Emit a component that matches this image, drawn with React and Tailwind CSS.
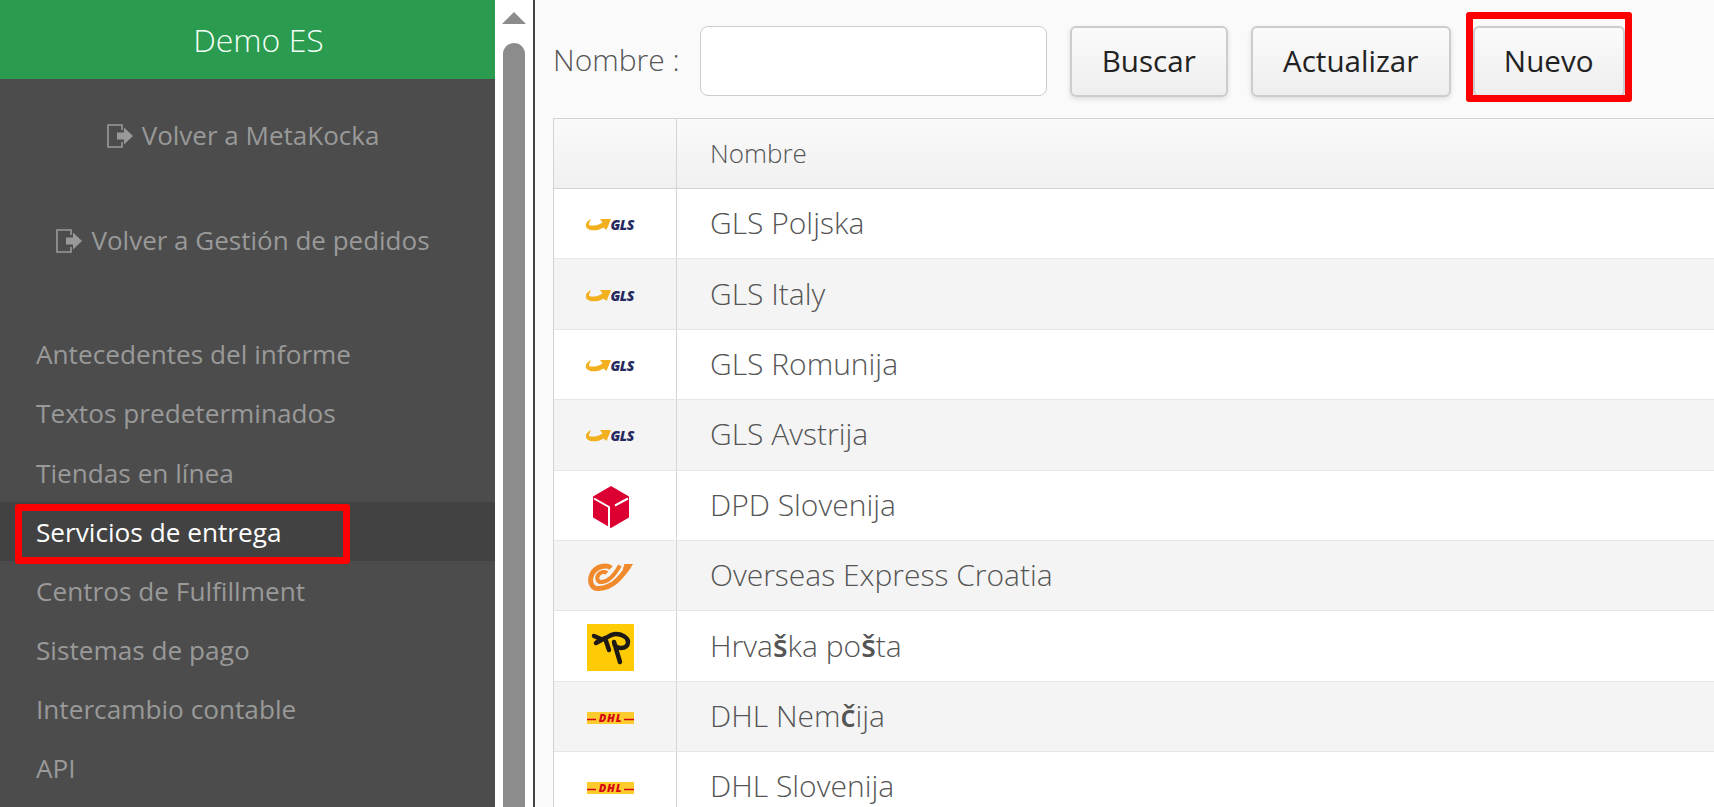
import React from "react";

const menuItems = [
  "Antecedentes del informe",
  "Textos predeterminados",
  "Tiendas en línea",
  "Servicios de entrega",
  "Centros de Fulfillment",
  "Sistemas de pago",
  "Intercambio contable",
  "API",
];

const rows = [
  { logo: "gls", name: "GLS Poljska" },
  { logo: "gls", name: "GLS Italy" },
  { logo: "gls", name: "GLS Romunija" },
  { logo: "gls", name: "GLS Avstrija" },
  { logo: "dpd", name: "DPD Slovenija" },
  { logo: "overseas", name: "Overseas Express Croatia" },
  { logo: "hp", name: <>Hrva<b className="font-semibold">š</b>ka po<b className="font-semibold">š</b>ta</> },
  { logo: "dhl", name: <>DHL Nem<b className="font-semibold">č</b>ija</> },
  { logo: "dhl", name: "DHL Slovenija" },
];

function ExitIcon() {
  return (
    <svg width="27" height="24" viewBox="0 0 27 24" className="shrink-0">
      <path d="M15 6V1H1v22h14v-5" fill="none" stroke="#999" strokeWidth="1.6" />
      <path d="M10 8.500h7V3.500l9 8.500-9 8.500v-5h-7z" fill="#999" />
    </svg>
  );
}

function GlsLogo() {
  return (
    <svg width="49" height="24" viewBox="0 -5 49 24">
      <path d="M5 1C1 3-.5 6-.5 8c2 5 11 6 18 1.500l3 2.500L25 1H14l2.500 3.500C11 8 6 8 3 7c0-2 1-4 2-6z" fill="#f2b01e" />
      <text x="24.500" y="12" fontFamily="Open Sans" fontWeight="800" fontStyle="italic" fontSize="14" fill="#26295e" letterSpacing="-0.5">GLS</text>
    </svg>
  );
}

function DpdLogo() {
  return (
    <svg width="36" height="42" viewBox="0 0 36 42">
      <path d="M18 0 36 10.500v21L18 42 0 31.500v-21z" fill="#dc0032" />
      <path d="M1 12.500 16 21v20M35 12.500 22 19.500" fill="none" stroke="#fff" strokeWidth="2" />
    </svg>
  );
}

function OverseasLogo() {
  return (
    <svg width="45" height="29" viewBox="0 0 45 29">
      <path d="M41 3C33 14 25 25 11 25.500 3 26 1 18 4 11 8 3 19 1 23 5" fill="none" stroke="#f08a2c" strokeWidth="5" />
      <path d="M32 2.500C29 8 23 18 14 19c-5 .5-6-5-3-8 2-2 6-3 8-1" fill="none" stroke="#f08a2c" strokeWidth="4" />
      <path d="M36 1h9c-4 6-7 10-12 15z" fill="#f08a2c" />
      <path d="M36 1.500C32 8 28 14 23 18.500" fill="none" stroke="#f4f4f4" strokeWidth="1.200" />
    </svg>
  );
}

function HpLogo() {
  return (
    <svg width="47" height="47" viewBox="0 0 47 47">
      <rect width="47" height="47" fill="#ffcb05" />
      <path d="M7 12l7 3-5 4 9-5 4 12M19 14c3-2 6-4 10-4 5 0 12 3 12 8 0 4-3 6-7 6-4 0-7-2-7-6M27 18l6 20" fill="none" stroke="#1d1a16" strokeWidth="4.500" strokeLinecap="round" strokeLinejoin="round" />
    </svg>
  );
}

function DhlLogo() {
  return (
    <svg width="47" height="24" viewBox="0 -6 47 24">
      <rect width="47" height="12" fill="#fecb2f" />
      <path d="M0 7.500h9M37 7.500h10" stroke="#d40511" strokeWidth="1.500" />
      <text x="23.500" y="10" textAnchor="middle" fontFamily="Open Sans" fontWeight="800" fontStyle="italic" fontSize="11" fill="#d40511" letterSpacing="0.8">DHL</text>
    </svg>
  );
}

function Logo({ type }) {
  if (type === "gls") return <GlsLogo />;
  if (type === "dpd") return <DpdLogo />;
  if (type === "overseas") return <OverseasLogo />;
  if (type === "hp") return <HpLogo />;
  return <DhlLogo />;
}

function Button({ children, className }) {
  return (
    <button className={"h-[71px] rounded-md border-2 border-[#ccc] bg-gradient-to-b from-[#fbfbfb] to-[#eeeeee] text-[29.600px] text-[#222] shadow-[0_2px_5px_rgba(0,0,0,0.12)] " + className}>
      {children}
    </button>
  );
}

export default function App() {
  return (
    <div className="flex h-screen overflow-hidden bg-white font-['Open_Sans',sans-serif]">
      {/* sidebar */}
      <aside className="w-[495px] shrink-0 bg-[#4c4c4c]">
        <div className="flex h-[79px] items-center justify-center bg-[#2a9b4f] pl-[22px] text-[32px] font-light text-[#f2fff6]">
          Demo ES
        </div>
        <div className="mt-[4px] flex h-[105px] items-center justify-center gap-[8px] pr-[9px] text-[26px] text-[#999]">
          <ExitIcon />
          <span>Volver a MetaKocka</span>
        </div>
        <div className="flex h-[105px] items-center justify-center gap-[8px] pr-[9px] text-[26px] text-[#999]">
          <ExitIcon />
          <span>Volver a Gestión de pedidos</span>
        </div>
        <ul className="relative mt-[31.500px]">
          {menuItems.map((item) => {
            const active = item === "Servicios de entrega";
            return (
              <li
                key={item}
                className={
                  active
                    ? "flex h-[59.100px] items-center bg-[#424242] pl-[36px] pt-[2px] text-[26.200px] text-white"
                    : "flex h-[59.100px] items-center pl-[36px] pt-[2px] text-[26.200px] text-[#999]"
                }
              >
                {item}
              </li>
            );
          })}
          <li className="absolute left-[15px] top-[179px] h-[60px] w-[335px] rounded-[3px] border-[7px] border-[#ff0000]" />
        </ul>
      </aside>

      {/* scroll bar */}
      <div className="flex w-[38px] shrink-0 flex-col pl-[7px] pt-[12px]">
        <div className="h-0 w-0 border-x-[12px] border-b-[12px] border-x-transparent border-b-[#8c8c8c]" />
        <div className="ml-[1px] mt-[19px] w-[22px] flex-1 rounded-t-[11px] bg-[#8c8c8c]" />
      </div>

      {/* main */}
      <main className="min-w-0 flex-1 border-l-2 border-[#444] bg-[#fafafa]">
        <div className="relative flex h-[118px] items-start pl-[18px] pt-[26px]">
          <label className="mr-[20px] flex h-[70px] items-center pb-[3px] text-[30px] font-light text-[#555]">Nombre :</label>
          <input className="h-[70px] w-[347px] rounded-lg border border-[#ccc] bg-white" />
          <Button className="ml-[23px] w-[158px]">Buscar</Button>
          <Button className="ml-[23px] w-[200px]">Actualizar</Button>
          <Button className="ml-[22px] w-[152px]">Nuevo</Button>
          <div className="absolute left-[931px] top-[12px] h-[90px] w-[166px] rounded-[3px] border-[7px] border-[#ff0000]" />
        </div>

        <div className="ml-[18px] border-l border-t border-[#d4d4d4] bg-white">
          <div className="flex h-[70px] border-b border-[#d4d4d4] bg-gradient-to-b from-[#fafafa] to-[#f0f0f0]">
            <div className="w-[123px] shrink-0 border-r border-[#d4d4d4]" />
            <div className="flex items-center pl-[33px] text-[26px] font-light text-[#555]">Nombre</div>
          </div>
          {rows.map((row, i) => (
            <div key={i} className={i % 2 === 1 ? "flex h-[70.400px] border-b border-[#e6e6e6] bg-[#f4f4f4]" : "flex h-[70.400px] border-b border-[#e6e6e6] bg-white"}>
              <div className="flex w-[123px] shrink-0 items-center justify-center border-r border-[#d4d4d4] pr-[9px] pt-[3px]">
                <Logo type={row.logo} />
              </div>
              <div className="flex items-center pb-[2px] pl-[33px] text-[30px] font-light text-[#555]">{row.name}</div>
            </div>
          ))}
        </div>
      </main>
    </div>
  );
}
